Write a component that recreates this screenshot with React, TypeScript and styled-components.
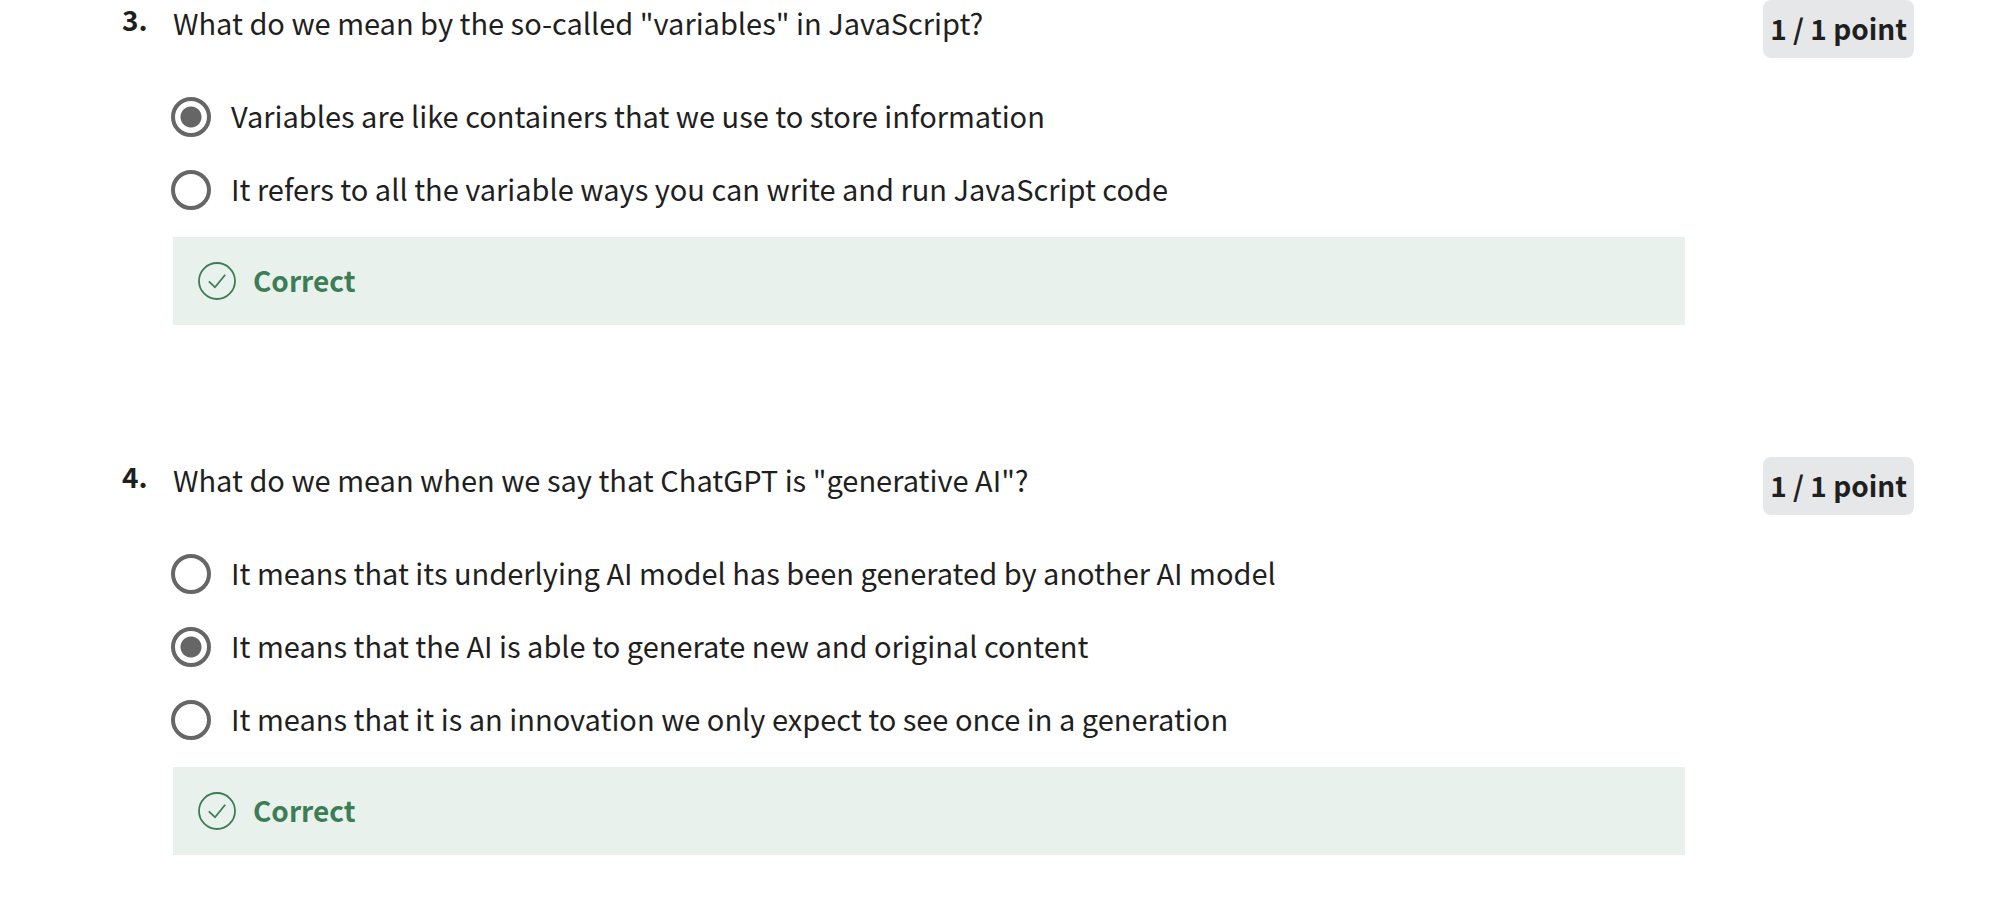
import React from "react";
import styled, { createGlobalStyle } from "styled-components";

const GlobalStyle = createGlobalStyle`
  *, *::before, *::after { box-sizing: border-box; }
  body {
    margin: 0;
    background: #fff;
    color: #1f1f1f;
    font-family: "Noto Sans CJK SC", "Noto Sans", sans-serif;
    font-size: 29px;
    line-height: 44px;
  }
`;

const Quiz = styled.main`
  display: flex;
  flex-direction: column;
  gap: 132px;
  padding: 0 92px 62px 122px;
`;

const Question = styled.section`
  display: grid;
  grid-template-columns: 51px minmax(0, 1fr) auto;
  align-items: start;
`;

const QuestionNumber = styled.span`
  font-size: 28px;
  line-height: 38px;
  font-weight: 600;
`;

const Body = styled.fieldset`
  min-width: 0;
  margin: 0 78px 0 0;
  padding: 0;
  border: 0;
`;

const Prompt = styled.legend`
  padding: 0;
  margin-bottom: 49px;
`;

const Options = styled.div`
  display: flex;
  flex-direction: column;
  gap: 25px;
  padding-bottom: 23px;
`;

const Option = styled.label`
  display: flex;
  align-items: flex-start;
  gap: 20px;
  margin-left: -2px;
  cursor: pointer;
`;

const Radio = styled.input`
  appearance: none;
  flex: none;
  width: 40px;
  height: 40px;
  margin: 4px 0;
  border: 4px solid #666;
  border-radius: 50%;
  background: #fff;
  &:checked {
    background: radial-gradient(circle, #666 10px, #fff 11px);
  }
`;

const Feedback = styled.div`
  display: flex;
  align-items: flex-start;
  gap: 17px;
  padding: 21px 25px 23px;
  background: #e8f1ec;
  color: #3c7d56;
  font-size: 28px;
  font-weight: 600;
  svg {
    flex: none;
    margin-top: 4px;
  }
`;

const Points = styled.span`
  padding: 6px 7px 8px;
  border-radius: 8px;
  background: #e5e7e8;
  font-size: 28px;
  font-weight: 600;
`;

const CheckIcon = () => (
  <svg width="38" height="38" viewBox="0 0 38 38" fill="none" stroke="currentColor" strokeWidth="1.8" aria-hidden="true">
    <circle cx="19" cy="19" r="18" />
    <path d="M10.8 19.4L17 25.2 27.2 12.8" />
  </svg>
);

interface QuestionData {
  number: number;
  prompt: string;
  options: string[];
  selected: number;
}

const questions: QuestionData[] = [
  {
    number: 3,
    prompt: 'What do we mean by the so-called "variables" in JavaScript?',
    options: [
      "Variables are like containers that we use to store information",
      "It refers to all the variable ways you can write and run JavaScript code",
    ],
    selected: 0,
  },
  {
    number: 4,
    prompt: 'What do we mean when we say that ChatGPT is "generative AI"?',
    options: [
      "It means that its underlying AI model has been generated by another AI model",
      "It means that the AI is able to generate new and original content",
      "It means that it is an innovation we only expect to see once in a generation",
    ],
    selected: 1,
  },
];

export default function App() {
  return (
    <>
      <GlobalStyle />
      <Quiz>
        {questions.map((q) => (
          <Question key={q.number}>
            <QuestionNumber>{q.number}.</QuestionNumber>
            <Body>
              <Prompt>{q.prompt}</Prompt>
              <Options>
                {q.options.map((text, i) => (
                  <Option key={text}>
                    <Radio type="radio" name={`question-${q.number}`} defaultChecked={i === q.selected} />
                    {text}
                  </Option>
                ))}
              </Options>
              <Feedback>
                <CheckIcon />
                Correct
              </Feedback>
            </Body>
            <Points>1 / 1 point</Points>
          </Question>
        ))}
      </Quiz>
    </>
  );
}
